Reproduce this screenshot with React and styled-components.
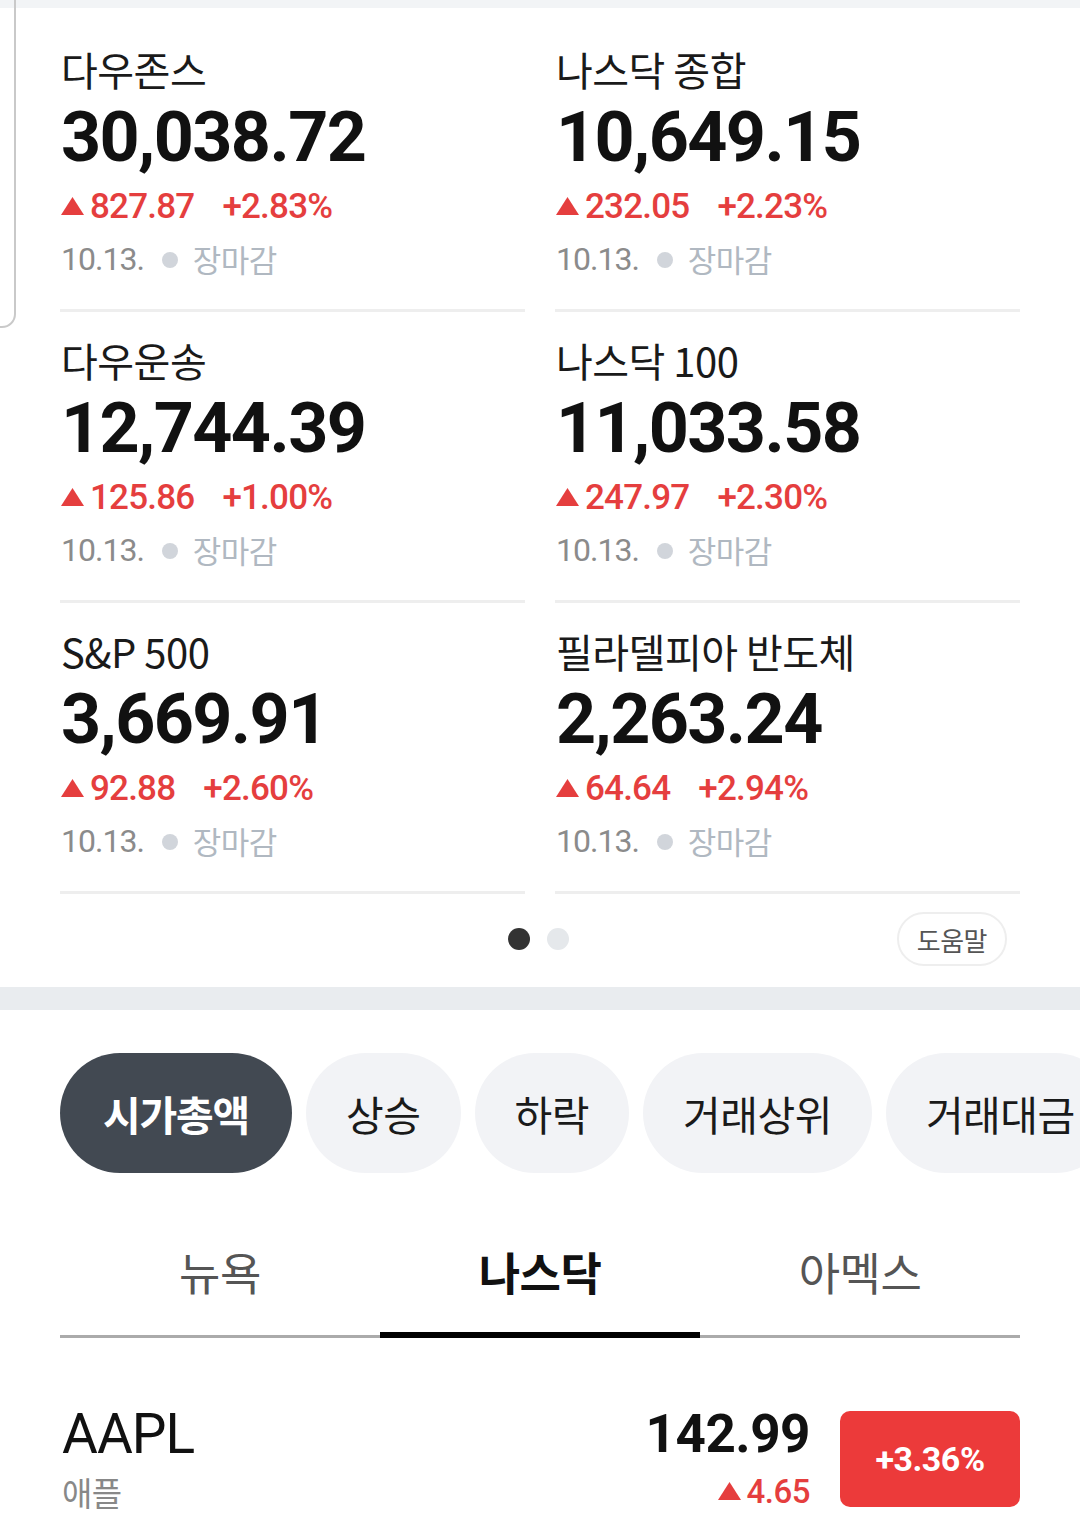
import React from 'react';
import styled, { createGlobalStyle } from 'styled-components';

const GlobalStyle = createGlobalStyle`
	html, body {
		margin: 0;
		padding: 0;
		background: #ffffff;
	}
	body {
		font-family: 'Roboto', 'Noto Sans CJK KR', sans-serif;
		color: #111111;
	}
`;

const indices = [
	{ name: '다우존스', value: '30,038.72', diff: '827.87', rate: '+2.83%' },
	{ name: '나스닥 종합', value: '10,649.15', diff: '232.05', rate: '+2.23%' },
	{ name: '다우운송', value: '12,744.39', diff: '125.86', rate: '+1.00%' },
	{ name: '나스닥 100', value: '11,033.58', diff: '247.97', rate: '+2.30%' },
	{ name: 'S&P 500', value: '3,669.91', diff: '92.88', rate: '+2.60%' },
	{ name: '필라델피아 반도체', value: '2,263.24', diff: '64.64', rate: '+2.94%' },
];

const chips = ['시가총액', '상승', '하락', '거래상위', '거래대금'];
const tabs = ['뉴욕', '나스닥', '아멕스'];

function UpArrow() {
	return (
		<Arrow viewBox='0 0 23 18' aria-hidden='true'>
			<polygon points='11.5,0 23,18 0,18' fill='#e53e3e' />
		</Arrow>
	);
}

function App() {
	return (
		<Page>
			<GlobalStyle />
			<PanelEdge />
			<TopStrip />
			<IndexGrid>
				{indices.map((item) => (
					<IndexCell key={item.name}>
						<IndexName>{item.name}</IndexName>
						<IndexValue>{item.value}</IndexValue>
						<ChangeRow>
							<UpArrow />
							<span>{item.diff}</span>
							<Rate>{item.rate}</Rate>
						</ChangeRow>
						<DateRow>
							<span>10.13.</span>
							<Dot />
							<Status>장마감</Status>
						</DateRow>
					</IndexCell>
				))}
			</IndexGrid>
			<PagerRow>
				<span />
				<Dots>
					<PageDot active />
					<PageDot />
				</Dots>
				<HelpButton>도움말</HelpButton>
			</PagerRow>
			<Band />
			<ChipRow>
				{chips.map((c, i) => (
					<Chip key={c} active={i === 0}>
						{c}
					</Chip>
				))}
			</ChipRow>
			<TabBar>
				{tabs.map((t) => (
					<Tab key={t} active={t === '나스닥'}>
						{t}
					</Tab>
				))}
			</TabBar>
			<StockRow>
				<StockInfo>
					<Ticker>AAPL</Ticker>
					<StockName>애플</StockName>
				</StockInfo>
				<PriceInfo>
					<Price>142.99</Price>
					<PriceDiff>
						<UpArrow />
						4.65
					</PriceDiff>
				</PriceInfo>
				<RateBadge>+3.36%</RateBadge>
			</StockRow>
		</Page>
	);
}

export default App;

const Page = styled.div`
	position: relative;
	width: 1080px;
	min-height: 1534px;
	overflow: hidden;
	background: #ffffff;
`;

const PanelEdge = styled.div`
	position: absolute;
	left: -30px;
	top: -12px;
	width: 42px;
	height: 336px;
	border: 2px solid #c9c9c9;
	border-radius: 0 0 14px 0;
	pointer-events: none;
`;

const TopStrip = styled.div`
	height: 8px;
	background: #f2f4f6;
`;

const IndexGrid = styled.div`
	display: grid;
	grid-template-columns: 1fr 1fr;
	column-gap: 30px;
	padding: 13px 60px 0;
`;

const IndexCell = styled.div`
	padding: 26px 0 30px 1px;
	border-bottom: 3px solid #eeeeee;
`;

const IndexName = styled.div`
	font-family: 'Noto Sans CJK KR', sans-serif;
	font-size: 40px;
	line-height: 44px;
	color: #1a1a1a;
	letter-spacing: -0.5px;
`;

const IndexValue = styled.div`
	margin-top: 8px;
	font-family: 'Roboto', sans-serif;
	font-weight: 700;
	font-size: 70px;
	line-height: 76px;
	letter-spacing: -1.6px;
	color: #111111;
`;

const Arrow = styled.svg`
	width: 23px;
	height: 18px;
	margin: 0 6px 2px 0;
	flex: none;
`;

const ChangeRow = styled.div`
	margin-top: 12px;
	display: flex;
	align-items: center;
	font-family: 'Roboto', sans-serif;
	font-weight: 500;
	font-size: 35px;
	line-height: 40px;
	letter-spacing: -0.8px;
	color: #e53e3e;
`;

const Rate = styled.span`
	margin-left: 28px;
`;

const DateRow = styled.div`
	margin-top: 12px;
	display: flex;
	align-items: center;
	font-family: 'Roboto', sans-serif;
	font-size: 32px;
	line-height: 40px;
	letter-spacing: -1px;
	color: #8b8b8b;
`;

const Dot = styled.span`
	width: 16px;
	height: 16px;
	border-radius: 50%;
	background: #d1d5db;
	margin: 2px 15px 0 18px;
`;

const Status = styled.span`
	font-family: 'Noto Sans CJK KR', sans-serif;
	font-size: 31px;
	letter-spacing: -0.5px;
	color: #b0b8c1;
`;

const PagerRow = styled.div`
	display: grid;
	grid-template-columns: 1fr auto 1fr;
	align-items: center;
	padding: 18px 60px 21px;
`;

const Dots = styled.div`
	display: flex;
	gap: 17px;
	margin-left: -3px;
`;

const PageDot = styled.span`
	width: 22px;
	height: 22px;
	border-radius: 50%;
	background: ${(p) => (p.active ? '#333333' : '#e5e8eb')};
`;

const HelpButton = styled.div`
	justify-self: end;
	margin-right: 13px;
	box-sizing: border-box;
	height: 54px;
	padding: 0 18px;
	display: flex;
	align-items: center;
	border: 2px solid #eeeeee;
	border-radius: 27px;
	font-family: 'Noto Sans CJK KR', sans-serif;
	font-size: 26px;
	letter-spacing: -0.5px;
	color: #555555;
`;

const Band = styled.div`
	height: 23px;
	background: #e9ecef;
`;

const ChipRow = styled.div`
	display: flex;
	gap: 14px;
	padding: 43px 0 0 60px;
	white-space: nowrap;
	overflow: hidden;
`;

const Chip = styled.div`
	flex: none;
	height: 120px;
	padding: 0 ${(p) => (p.active ? '43px' : '40px')};
	display: flex;
	align-items: center;
	border-radius: 60px;
	font-family: 'Noto Sans CJK KR', sans-serif;
	font-size: 41px;
	font-weight: ${(p) => (p.active ? 700 : 400)};
	letter-spacing: ${(p) => (p.active ? '-1.2px' : '-0.5px')};
	background: ${(p) => (p.active ? '#424952' : '#f2f3f6')};
	color: ${(p) => (p.active ? '#ffffff' : '#1a1a1a')};
`;

const TabBar = styled.div`
	display: grid;
	grid-template-columns: repeat(3, 1fr);
	margin: 71px 60px 0;
	border-bottom: 3px solid #ababab;
`;

const Tab = styled.div`
	text-align: center;
	padding-bottom: 32px;
	margin-bottom: -3px;
	border-bottom: 6px solid ${(p) => (p.active ? '#000000' : 'transparent')};
	font-family: 'Noto Sans CJK KR', sans-serif;
	font-size: 45px;
	line-height: 56px;
	letter-spacing: -0.5px;
	font-weight: ${(p) => (p.active ? 700 : 400)};
	color: ${(p) => (p.active ? '#111111' : '#555555')};
`;

const StockRow = styled.div`
	display: flex;
	align-items: center;
	padding: 68px 60px 0 62px;
`;

const StockInfo = styled.div`
	flex: 1;
`;

const Ticker = styled.div`
	font-family: 'Roboto', sans-serif;
	font-size: 55px;
	line-height: 56px;
	letter-spacing: -1px;
	color: #111111;
`;

const StockName = styled.div`
	margin-top: 10px;
	font-family: 'Noto Sans CJK KR', sans-serif;
	font-size: 33px;
	line-height: 40px;
	letter-spacing: -0.5px;
	color: #888888;
`;

const PriceInfo = styled.div`
	display: flex;
	flex-direction: column;
	align-items: flex-end;
	margin-right: 30px;
`;

const Price = styled.div`
	font-family: 'Roboto', sans-serif;
	font-weight: 700;
	font-size: 53px;
	line-height: 56px;
	letter-spacing: -0.5px;
	color: #111111;
`;

const PriceDiff = styled.div`
	margin-top: 10px;
	display: flex;
	align-items: center;
	font-family: 'Roboto', sans-serif;
	font-weight: 500;
	font-size: 33px;
	line-height: 40px;
	letter-spacing: -0.5px;
	color: #e53e3e;
`;

const RateBadge = styled.div`
	width: 180px;
	height: 96px;
	display: flex;
	align-items: center;
	justify-content: center;
	border-radius: 10px;
	background: #ec3a3a;
	font-family: 'Roboto', sans-serif;
	font-weight: 700;
	font-size: 34px;
	letter-spacing: -0.5px;
	color: #ffffff;
`;
